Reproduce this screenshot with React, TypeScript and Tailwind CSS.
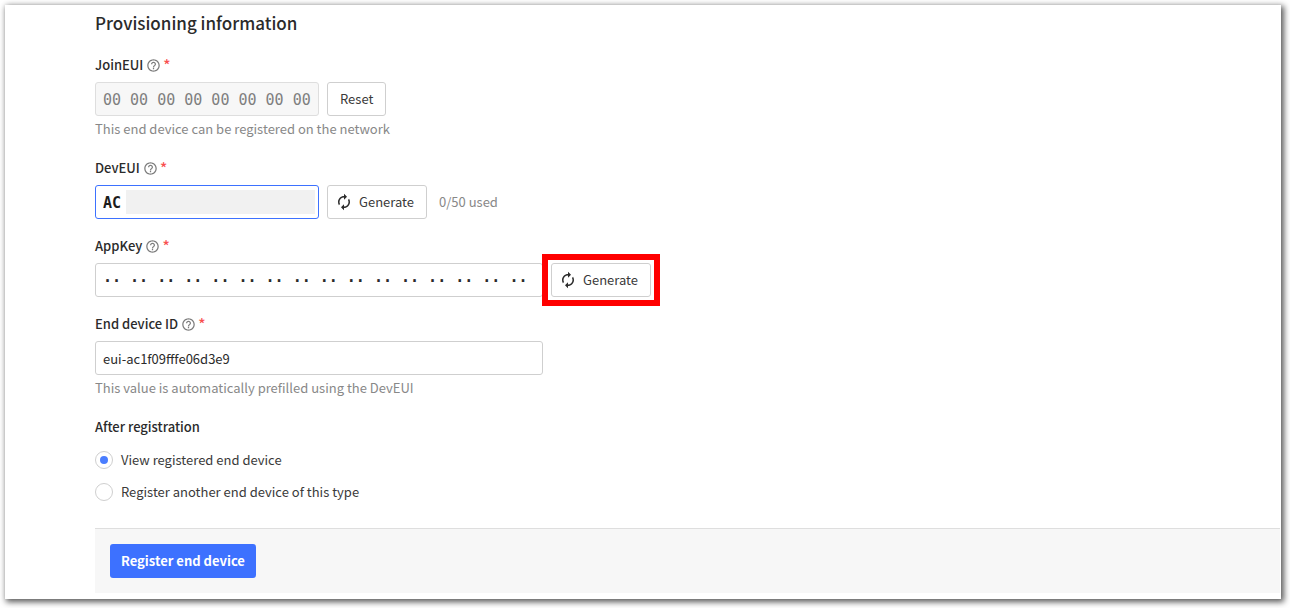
import React, { useState } from 'react';
import { MdAutorenew, MdHelpOutline } from 'react-icons/md';

const inputStyle = 'h-[34px] rounded-[3px] border px-[7px]';
const monoFont = "pt-[2px] font-['DejaVu_Sans_Mono',monospace] text-[15px]";

const FieldLabel = ({ htmlFor, children }) => (
  <label htmlFor={htmlFor} className="mb-[5px] flex h-6 items-center font-medium text-[#2b2b2b]">
    {children}
    <MdHelpOutline className="ml-[3px] size-[15px] text-[#7c7c7c]" />
    <span className="ml-[2px] text-[15px] text-[#f8504f]">*</span>
  </label>
);

const Button = ({ children, onClick = undefined }) => (
  <button
    type="button"
    onClick={onClick}
    className="flex h-[34px] items-center gap-[6px] rounded-[3px] border border-[#cfcfcf] bg-white px-3 text-[#3a3a3a] hover:bg-gray-50"
  >
    {children}
  </button>
);

const GenerateButton = () => (
  <Button>
    <MdAutorenew className="-ml-[5px] size-[18px] text-[#2b2b2b]" />
    Generate
  </Button>
);

const actions = [
  { value: 'view', label: 'View registered end device' },
  { value: 'another', label: 'Register another end device of this type' },
];

const App = () => {
  const [joinEui, setJoinEui] = useState('00 00 00 00 00 00 00 00');
  const [devEui, setDevEui] = useState('AC');
  const [appKey, setAppKey] = useState(Array(16).fill('··').join(' '));
  const [deviceId, setDeviceId] = useState('eui-ac1f09fffe06d3e9');
  const [action, setAction] = useState('view');

  return (
    <div className="flow-root bg-white font-['Noto_Sans_CJK_SC',sans-serif] text-[13px] leading-6 text-[#3a3a3a]">
      <form className="mt-[5px] mr-[9px] mb-[9px] ml-[5px] bg-white pt-1 pr-px pb-[6px] pl-[90px] shadow-[2px_2px_6px_1px_rgba(0,0,0,0.65)]">
        <h1 className="mb-4 text-[17px] leading-7 font-medium text-[#2b2b2b]">Provisioning information</h1>

        <div className="mb-[15px]">
          <FieldLabel htmlFor="join-eui">JoinEUI</FieldLabel>
          <div className="flex gap-2">
            <input
              id="join-eui"
              value={joinEui}
              disabled
              className={`${inputStyle} ${monoFont} w-56 border-[#dedede] bg-[#f7f7f7] text-[#7f7f7f]`}
            />
            <Button onClick={() => setJoinEui('00 00 00 00 00 00 00 00')}>Reset</Button>
          </div>
          <p className="leading-[25px] text-[#888888]">This end device can be registered on the network</p>
        </div>

        <div className="mb-[15px]">
          <FieldLabel htmlFor="dev-eui">DevEUI</FieldLabel>
          <div className="flex items-center gap-2">
            <div className="relative">
              <input
                id="dev-eui"
                value={devEui}
                onChange={(e) => setDevEui(e.target.value)}
                className={`${inputStyle} ${monoFont} block w-56 border-[#3d71ff] font-bold text-[#1c1c1c] outline-none`}
              />
              <div className="pointer-events-none absolute inset-y-[5px] right-1 left-[31px] bg-[#f1f1f1]" />
            </div>
            <GenerateButton />
            <span className="ml-1 text-[#888888]">0/50 used</span>
          </div>
        </div>

        <div className="mb-[15px]">
          <FieldLabel htmlFor="app-key">AppKey</FieldLabel>
          <div className="flex gap-2">
            <input
              id="app-key"
              value={appKey}
              onChange={(e) => setAppKey(e.target.value)}
              className={`${inputStyle} ${monoFont} w-[448px] border-[#cfcfcf] font-bold text-[#2b2b2b]`}
            />
            <div className="relative">
              <GenerateButton />
              <div className="pointer-events-none absolute -inset-x-[9px] -inset-y-[9px] border-6 border-[#ff0000]" />
            </div>
          </div>
        </div>

        <div className="mb-[15px]">
          <FieldLabel htmlFor="device-id">End device ID</FieldLabel>
          <input
            id="device-id"
            value={deviceId}
            onChange={(e) => setDeviceId(e.target.value)}
            className={`${inputStyle} block w-[448px] border-[#cfcfcf] text-[#2b2b2b]`}
          />
          <p className="leading-[25px] text-[#888888]">This value is automatically prefilled using the DevEUI</p>
        </div>

        <fieldset className="mb-5">
          <legend className="mb-[5px] font-medium text-[#2b2b2b]">After registration</legend>
          {actions.map(({ value, label }) => (
            <label key={value} className="flex h-8 items-center gap-2">
              <input
                type="radio"
                name="action"
                value={value}
                checked={action === value}
                onChange={() => setAction(value)}
                className="grid size-[18px] appearance-none place-items-center rounded-full border border-[#cfcfcf] bg-white before:size-2 before:rounded-full checked:before:bg-[#4a7dff]"
              />
              {label}
            </label>
          ))}
        </fieldset>

        <div className="border-t border-[#dedede] bg-[#f7f7f7] p-[15px]">
          <button type="submit" className="block h-[34px] rounded-[3px] bg-[#3d71ff] px-[11px] font-bold text-white">
            Register end device
          </button>
        </div>
      </form>
    </div>
  );
};

export default App;
